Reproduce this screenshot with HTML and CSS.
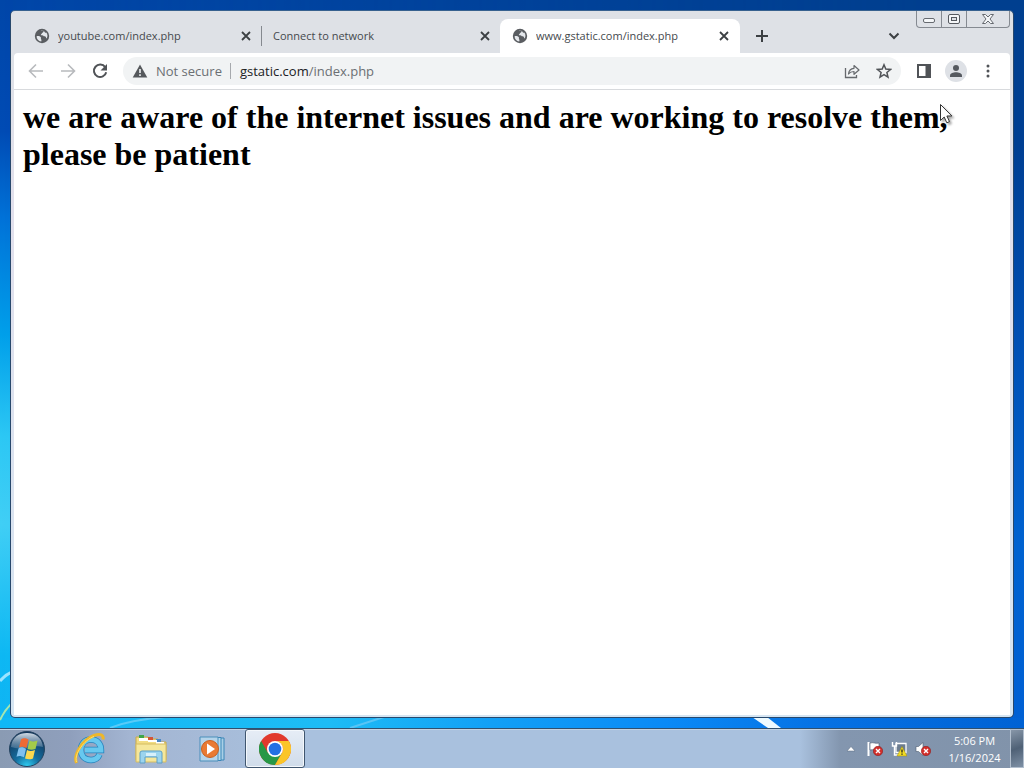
FILE: index.html
```html
<!DOCTYPE html>
<html lang="en">
<head>
<meta charset="utf-8">
<title>www.gstatic.com/index.php</title>
<link rel="stylesheet" href="styles.css">
</head>
<body>
<svg width="0" height="0" class="defs" aria-hidden="true">
  <defs>
    <symbol id="globe" viewBox="0 0 16 16">
      <circle cx="8" cy="8" r="7.2" fill="#5a5d61"/>
      <path d="M2.6 8.2c1.8-.3 3.6.1 4.2 1 .5.8-.2 1.400.3 2 .5.5.4 1.500.1 2.400C4.500 13.100 2.500 11 2.600 8.200zM6.800 2.700c1 .1 2-.2 2.600.3.500.6-.1 1.300-.9 1.700-.8.300-.6 1.200-1.400 1.500-.5.300-.2 1 .6 1 1-.1 1.600.2 1.900.9.400.8 1.500.3 2.100.7.600.5.200 1.500.900 1.700 1.300-1.600 1.100-4.400-.4-5.900-.7.300-1.300.1-1.500-.7-.9-.9-2.600-1.500-3.900-1.200z" fill="#e4e7eb"/>
    </symbol>
    <symbol id="close" viewBox="0 0 16 16"><path d="M4 4l8 8M12 4l-8 8" stroke="#3c4043" stroke-width="1.8" fill="none"/></symbol>
    <symbol id="error" viewBox="0 0 10 10"><circle cx="5" cy="5" r="4.700" fill="#d32f2b" stroke="#8f1c1c" stroke-width=".6"/><path d="M3 3l4 4M7 3l-4 4" stroke="#fff" stroke-width="1.400"/></symbol>
  </defs>
</svg>
<main class="desktop">
  <svg class="streaks" viewBox="0 0 1024 728" preserveAspectRatio="none" aria-hidden="true">
    <path d="M0 681Q5 675 12 672" stroke="#9be4ff" stroke-width="3" fill="none"/>
    <path d="M0 720Q4 711 12 703" stroke="#a5e6b0" stroke-width="2" fill="none"/>
    <path d="M110 728Q130 720 165 717" stroke="#58cbf8" stroke-width="2" fill="none"/>
    <path d="M350 728L384 717" stroke="#58c4f5" stroke-width="2" fill="none"/>
    <path d="M752 717h15l14 11h-13z" fill="#eefaff"/>
  </svg>
  <section class="window">
    <header class="tabstrip">
      <div class="tab tab-first">
        <svg class="icon"><use href="#globe"/></svg><span class="title">youtube.com/index.php</span>
        <button class="bare" aria-label="Close tab"><svg class="icon"><use href="#close"/></svg></button>
      </div>
      <div class="tab tab-second">
        <span class="title">Connect to network</span>
        <button class="bare" aria-label="Close tab"><svg class="icon"><use href="#close"/></svg></button>
      </div>
      <div class="tab tab-active">
        <svg class="icon"><use href="#globe"/></svg><span class="title">www.gstatic.com/index.php</span>
        <button class="bare" aria-label="Close tab"><svg class="icon"><use href="#close"/></svg></button>
      </div>
      <button class="bare newtab" aria-label="New tab"><svg class="icon" viewBox="0 0 16 16"><path d="M8 2v12M2 8h12" stroke="#3c4043" stroke-width="2"/></svg></button>
      <button class="bare search" aria-label="Search tabs"><svg class="icon" viewBox="0 0 16 16"><path d="M3.500 5.500L8 10l4.500-4.500" stroke="#3c4043" stroke-width="2" fill="none"/></svg></button>
      <div class="controls">
        <button aria-label="Minimize"><svg width="14" height="10" viewBox="0 0 14 10"><rect x="1.500" y="4.500" width="11" height="4" rx="1.500" fill="#f4f6f8" stroke="#666a70"/></svg></button>
        <button aria-label="Maximize"><svg width="14" height="12" viewBox="0 0 14 12"><rect x="1.500" y="1.500" width="11" height="9" rx="1.500" fill="#f4f6f8" stroke="#55595f"/><rect x="4.500" y="4.500" width="5" height="3" fill="#dee1e6" stroke="#55595f"/></svg></button>
        <button class="wide" aria-label="Close"><svg width="14" height="12" viewBox="0 0 14 12"><path d="M1.500 1.500h3L7 4l2.500-2.500h3L9 6l3.500 4.500h-3L7 8l-2.500 2.500h-3L5 6z" fill="#f4f6f8" stroke="#666a70"/></svg></button>
      </div>
    </header>
    <nav class="toolbar">
      <button class="bare" aria-label="Back"><svg class="icon" viewBox="0 0 16 16"><path d="M15 8H2M8 1.500L1.500 8 8 14.500" stroke="#b8babd" stroke-width="1.600" fill="none"/></svg></button>
      <button class="bare" aria-label="Forward"><svg class="icon" viewBox="0 0 16 16"><path d="M1 8h13M8 1.500L14.500 8 8 14.500" stroke="#b8babd" stroke-width="1.600" fill="none"/></svg></button>
      <button class="bare" aria-label="Reload"><svg class="icon" viewBox="0 0 16 16"><path d="M13.200 4.200A6.200 6.200 0 1 0 14.200 9.200" stroke="#505357" stroke-width="2" fill="none"/><path d="M15 1v6.500H8.500z" fill="#505357"/></svg></button>
      <div class="omnibox">
        <svg class="icon" viewBox="0 0 16 16"><path d="M8 1.500L15.300 14.500H.7z" fill="#55585c"/><path d="M8 6v4M8 11.200v1.800" stroke="#f1f3f4" stroke-width="1.600"/></svg>
        <span class="security">Not secure</span>
        <span class="url" role="textbox" aria-label="Address">gstatic.com<span class="path">/index.php</span></span>
        <button class="bare" aria-label="Share"><svg class="icon" viewBox="0 0 16 16"><path d="M1.500 5v9.500h11V12" stroke="#66696d" stroke-width="1.300" fill="none"/><path d="M4.500 11c.3-3.600 2.200-5.500 5.500-5.700V2.500L15 7l-5 4.300V8.500C7.500 8.500 5.900 9.200 4.500 11z" stroke="#66696d" stroke-width="1.200" fill="none" stroke-linejoin="round"/></svg></button>
        <button class="bare" aria-label="Bookmark this tab"><svg class="icon" viewBox="0 0 16 16"><path d="M8 1.800l1.800 4.300 4.700.4-3.600 3 1.100 4.600L8 11.700l-4 2.400 1.100-4.600-3.600-3 4.700-.4z" stroke="#505357" stroke-width="1.500" fill="none"/></svg></button>
      </div>
      <button class="bare" aria-label="Side panel"><svg class="icon" viewBox="0 0 16 16"><path d="M1 1h14v14H1zM3 3v10h6.500V3z" fill="#505357" fill-rule="evenodd"/></svg></button>
      <button class="bare avatar" aria-label="Profile"><svg class="icon" viewBox="0 0 16 16"><circle cx="8" cy="5" r="3" fill="#55595f"/><path d="M2 14v-1.500C2 10.300 5.500 9.200 8 9.200s6 1.100 6 3.300V14z" fill="#55595f"/></svg></button>
      <button class="bare" aria-label="Menu"><svg class="icon" viewBox="0 0 16 16" fill="#505357"><circle cx="8" cy="3" r="1.500"/><circle cx="8" cy="8" r="1.500"/><circle cx="8" cy="13" r="1.500"/></svg></button>
    </nav>
    <article class="page"><h1>we are aware of the internet issues and are working to resolve them, please be patient</h1></article>
  </section>
  <svg class="cursor" width="17" height="24" viewBox="0 0 17 24" aria-hidden="true"><path d="M1.500 1.500v16l3.700-3.500 2.600 5.800 2.700-1.200-2.600-5.600h5z" fill="#fff" stroke="#333" stroke-linejoin="round"/></svg>
</main>
<footer class="taskbar">
  <button class="bare start" aria-label="Start">
    <svg width="38" height="38" viewBox="0 0 38 38">
      <defs>
        <radialGradient id="orb" cx=".5" cy="1" r=".9"><stop offset="0" stop-color="#2fd0f5"/><stop offset=".4" stop-color="#146e9f"/><stop offset="1" stop-color="#12365c"/></radialGradient>
        <linearGradient id="shine" x2="0" y2="1"><stop stop-color="#e6eef5" stop-opacity=".9"/><stop offset="1" stop-color="#8da6bd" stop-opacity=".35"/></linearGradient>
      </defs>
      <circle cx="19" cy="19" r="17.500" fill="url(#orb)" stroke="#24435f"/>
      <path d="M3 17C4 7 11 3 19 3s15 4 16 14c-9-3-20 4-32 0z" fill="url(#shine)"/>
      <path d="M13 9.500c3-2 5-1 7.500 0l-2 8.500c-2.500-1-4.500-2-7.500-.5z" fill="#ee6a35"/>
      <path d="M21.500 10.500c3 1.500 5 1 8 0l-2 8.500c-3 1-5 1-8 0z" fill="#a3cc4a"/>
      <path d="M10.500 18.500c3-2 5-1 7.500.3l-2 8.500c-2.500-1-4.500-2-7.500-.6z" fill="#7fc0ee"/>
      <path d="M19 20c3 1.500 5 1 8 0l-2 8.500c-3 1.200-5 1-8 0z" fill="#fbd84f"/>
    </svg>
  </button>
  <button class="bare task" aria-label="Internet Explorer">
    <svg width="32" height="32" viewBox="0 0 32 32">
      <path d="M25.500 21.500c-1.500 3.500-4.500 5.500-8.500 5.500C11 27 7 23 7 17S11 6.500 17 6.500 27 11 27 17H11" fill="none" stroke="#2784bd" stroke-width="6.400"/>
      <path d="M25.500 21.500c-1.500 3.500-4.500 5.500-8.500 5.500C11 27 7 23 7 17S11 6.500 17 6.500 27 11 27 17H11" fill="none" stroke="#67c8ef" stroke-width="4.800"/>
      <path d="M2.500 30C-1 22 8 7 20 2.500c6-2 10-1 9 4" fill="none" stroke="#eeb72a" stroke-width="3"/>
      <path d="M2.500 29C0 21 10 7 20 3.500" fill="none" stroke="#ffe16b" stroke-width="1"/>
    </svg>
  </button>
  <button class="bare task" aria-label="File Explorer">
    <svg width="32" height="32" viewBox="0 0 32 32">
      <path d="M1 4h12l1 2h9l1 3h7v18H1z" fill="#f2dd83" stroke="#c9a94b"/>
      <path d="M4 2h5v3H4z" fill="#3fa648"/><path d="M13 4h5v3h-5z" fill="#d45536"/><path d="M21 6h5v3h-5z" fill="#4b89c5"/>
      <path d="M4 5h9v3H4zM13 7h9v2h-9zM21 9h8v2h-8z" fill="#fff"/>
      <path d="M1 11h30v18H1z" fill="#f5e79b" stroke="#d5bc62"/>
      <path d="M5 30V20q0-2 2-2h18q2 0 2 2v10h-5v-6H10v6z" fill="#9bd4ee" stroke="#5c9fc6"/>
      <path d="M11 20h10v3H11z" fill="#d7f0fa"/>
    </svg>
  </button>
  <button class="bare task" aria-label="Media Player">
    <svg width="32" height="32" viewBox="0 0 32 32">
      <path d="M10 5h18v22H10z" fill="#a9cfe6" stroke="#3b86b7"/><path d="M7 4.500h18v23H7z" fill="#b4d9ee" stroke="#3b86b7"/><path d="M4 4h18v24H4z" fill="#b5d4ea" stroke="#4a8fba"/>
      <circle cx="14" cy="16" r="8.500" fill="#e97a33" stroke="#c9611f"/><path d="M11 10.500v11l8-5.500z" fill="#fff"/>
    </svg>
  </button>
  <button class="bare task active" aria-label="Google Chrome">
    <svg width="32" height="32" viewBox="0 0 32 32">
      <circle cx="16" cy="16" r="16" fill="#e1392d"/>
      <path d="M2.140 8A16 16 0 0 0 16 32l6.930-12L16 16 9.070 20z" fill="#279847"/>
      <path d="M29.860 8A16 16 0 0 1 16 32l6.930-12A8 8 0 0 0 16 8z" fill="#fbc529"/>
      <circle cx="16" cy="16" r="8" fill="#fff"/><circle cx="16" cy="16" r="6.300" fill="#2270e3"/>
    </svg>
  </button>
  <div class="tray">
    <button class="bare more" aria-label="Show hidden icons"><svg width="10" height="6" viewBox="0 0 10 6"><path d="M5 .5L9 5H1z" fill="#fff" stroke="#5b6b80" stroke-width=".5"/></svg></button>
    <button class="bare" aria-label="Action Center"><svg class="icon" viewBox="0 0 16 16"><path d="M1.500 1v14" stroke="#fff" stroke-width="2"/><path d="M3 2c4-1 5 1 9 0v7c-4 1-5-1-9 0z" fill="#fff" stroke="#46566c" stroke-width=".6"/><use href="#error" x="6" y="5" width="10" height="10"/></svg></button>
    <button class="bare" aria-label="Network"><svg class="icon" viewBox="0 0 16 16"><path d="M5 2.500h10v9H5z" fill="#6c7d91" stroke="#fff" stroke-width="1.300"/><path d="M1.500 1v4h4V1M3.500 5v9h4" fill="none" stroke="#fff" stroke-width="1.400"/><path d="M11 5.500l5 9.500H6z" fill="#f2dc22" stroke="#9c8b12" stroke-width=".5"/><path d="M11 8.500v3M11 12.500v1.300" stroke="#222" stroke-width="1.300"/></svg></button>
    <button class="bare" aria-label="Volume"><svg class="icon" viewBox="0 0 16 16"><path d="M1 5.500h2.500L8 1.500v13l-4.500-4H1z" fill="#fff" stroke="#4b5a6e" stroke-width=".6"/><use href="#error" x="6" y="5" width="10" height="10"/></svg></button>
    <time class="clock" datetime="2024-01-16T17:06"><span>5:06 PM</span><span>1/16/2024</span></time>
    <button class="bare peek" aria-label="Show desktop"></button>
  </div>
</footer>
</body>
</html>
```
FILE: styles.css
```css
* { box-sizing: border-box; }
body {
  margin: 0;
  min-height: 100vh;
  display: flex;
  flex-direction: column;
  font: 11px/16px "Open Sans", "Noto Sans", sans-serif;
  color: #3c4043;
}
.defs { position: absolute; }
.icon { width: 16px; height: 16px; display: block; flex: none; }
.bare { border: 0; padding: 0; background: none; display: flex; align-items: center; justify-content: center; flex: none; }

.desktop {
  position: relative;
  flex: 1;
  display: flex;
  padding: 10px;
  background: linear-gradient(#003f8f, #003f93 20%, #0052b8 50%, #0062d0 75%, #0060d4);
}
.desktop::before {
  content: "";
  position: absolute;
  inset: 0;
  background: linear-gradient(#0046a8, #004bb4 18%, #0072d8 30%, #00a0ea 46%, #2cc8f4 60%, #40cff5 72%, #0db8f3 90%, #10b4f4);
  mask-image: linear-gradient(to right, #000, transparent 90%);
}
.desktop::after {
  content: "";
  position: absolute;
  inset: auto 0 0;
  height: 10px;
  background: linear-gradient(to right, #10b8f6, #1ebcf5 32%, #12a0f6 48%, #0a8af6 65%, #0672e4 80%, #0062d4);
}
.streaks { position: absolute; z-index: 1; inset: 0; width: 100%; height: 100%; }

.window {
  position: relative;
  z-index: 2;
  flex: 1;
  display: flex;
  flex-direction: column;
  padding: 0 3px 2px;
  border: 1px solid #28486c;
  border-top-color: #37618f;
  border-radius: 5px;
  background: linear-gradient(#dee1e6 40px, #e2e0ec 200px, #d5e5f2);
}
.tabstrip { display: flex; height: 42px; padding-top: 8px; color: #45494d; }
.tab { display: flex; align-items: center; gap: 8px; width: 238px; min-width: 0; padding: 0 7px 0 11px; }
.tab .title { flex: 1; white-space: nowrap; overflow: hidden; }
.tab-first { margin-left: 9px; }
.tab-second { width: 239px; padding-left: 12px; background: linear-gradient(#85898f, #85898f) left center / 1px 20px no-repeat; }
.tab-active { width: 240px; padding: 0 8px 0 12px; border-radius: 8px 8px 0 0; background: #fff; }
.newtab { width: 44px; }
.search { width: 32px; margin-left: auto; margin-right: 6px; }
.controls { display: flex; flex: none; height: 17px; margin-top: -8px; border: 1px solid #858a91; border-top: 0; border-radius: 0 0 4px 4px; }
.controls button { width: 25px; padding: 0; border: 0; border-right: 1px solid #858a91; background: none; display: flex; align-items: center; justify-content: center; }
.controls .wide { width: 42px; border-right: 0; }

.toolbar { display: flex; align-items: center; gap: 16px; height: 37px; padding: 0 14px; border-bottom: 1px solid #d8dadd; border-radius: 4px 4px 0 0; background: #fff; }
.omnibox { flex: 1; display: flex; align-items: center; height: 28px; margin: 0 -1px; padding: 0 9px; border-radius: 14px; background: #f1f3f4; font-size: 13px; color: #6b6f73; }
.security { margin-left: 8px; padding-right: 8px; border-right: 1px solid #a6a9ad; white-space: nowrap; }
.url { flex: 1; margin-left: 9px; color: #202124; white-space: nowrap; }
.path { color: #6b6f73; }
.omnibox .bare + .bare { margin-left: 16px; }
.avatar { width: 22px; height: 22px; margin: 0 -3px; border-radius: 50%; background: #dee1e6; }

.page { flex: 1; padding: 9px; background: #fff; color: #000; }
h1 { margin: 0; font: bold 32px/37px "Liberation Serif", serif; }
.cursor { position: absolute; z-index: 3; left: 939px; top: 103px; filter: drop-shadow(2px 2px 1px rgba(0, 0, 0, .35)); }

.taskbar {
  display: flex;
  height: 40px;
  border-top: 1px solid #30506f;
  box-shadow: inset 0 1px #c3d3e4;
  background: linear-gradient(to right, #8a9bb3, #8f9fbc 70px, #a3b5d2 130px, #a9c1de 300px, #a9c1de 800px, #8396af 840px, #8193aa);
}
.start { width: 54px; }
.task { width: 60px; margin-right: 1px; }
.start + .task { margin-left: 6px; }
.task.active { margin-left: 2px; border: 1px solid #40566f; border-radius: 3px; background: linear-gradient(#e6edf6, #d0dcea); box-shadow: inset 0 0 0 1px #f4f8fc; }
.tray { display: flex; align-items: center; gap: 8px; margin-left: auto; }
.more { width: 16px; }
.clock { display: flex; flex-direction: column; align-items: center; width: 71px; line-height: 17px; color: #fff; }
.peek { align-self: stretch; width: 14px; margin-left: -8px; border: 1px solid #b2bfce; background: linear-gradient(160deg, #8796a8, #4f6176 50%, #7e90a5); }
```
